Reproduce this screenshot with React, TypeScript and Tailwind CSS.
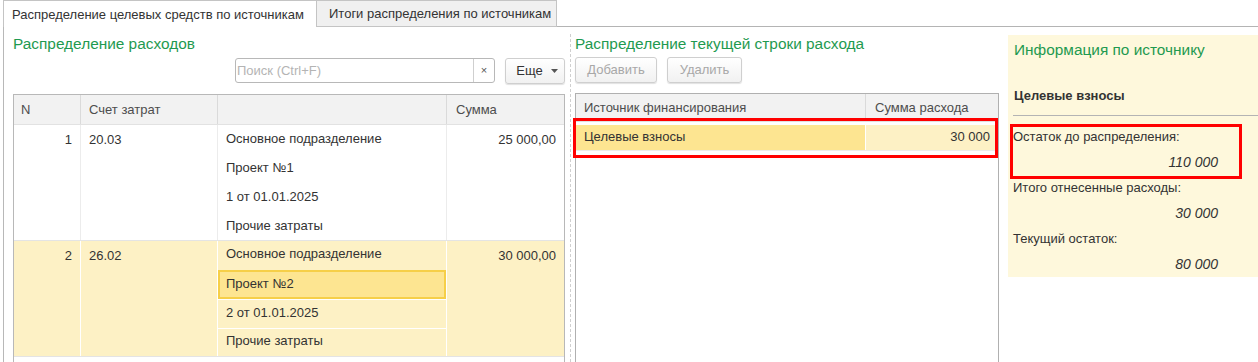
import React from "react";

const leftRows = [
  {
    n: "1",
    account: "20.03",
    lines: ["Основное подразделение", "Проект №1", "1 от 01.01.2025", "Прочие затраты"],
    sum: "25 000,00",
    current: false,
  },
  {
    n: "2",
    account: "26.02",
    lines: ["Основное подразделение", "Проект №2", "2 от 01.01.2025", "Прочие затраты"],
    sum: "30 000,00",
    current: true,
  },
];

const sourceInfo = [
  { label: "Остаток до распределения:", value: "110 000" },
  { label: "Итого отнесенные расходы:", value: "30 000" },
  { label: "Текущий остаток:", value: "80 000" },
];

function ToolButton({ children, disabled, className = "" }: { children: React.ReactNode; disabled?: boolean; className?: string }) {
  return (
    <button
      type="button"
      className={`flex h-[26px] items-center justify-center rounded-[3px] border border-[#cfcfcf] bg-gradient-to-b from-white to-[#f1f1f1] shadow-[0_1px_1px_rgba(0,0,0,0.12)] ${
        disabled ? "text-[#a8a8a8]" : "text-[#333]"
      } ${className}`}
    >
      {children}
    </button>
  );
}

function ExpensesTable() {
  return (
    <div className="mt-[11px] w-[552px] border border-[#b8b8b8]">
      {/* header */}
      <div className="flex h-[30px] border-b border-[#e2e2e2] bg-[#f2f2f2] text-[#4d4d4d]">
        <div className="flex w-[67px] items-center border-r border-[#dadada] pl-[7px]">N</div>
        <div className="flex w-[137px] items-center border-r border-[#dadada] pl-[8px]">Счет затрат</div>
        <div className="w-[229px] border-r border-[#dadada]" />
        <div className="flex flex-1 items-center pl-[9px]">Сумма</div>
      </div>
      {leftRows.map((row) => {
        const line = row.current ? "border-white" : "border-[#ececec]";
        return (
          <div
            key={row.n}
            className={`flex border-b border-[#e4e4e4] ${row.current ? "bg-[#fdf1c5]" : "bg-white"}`}
          >
            <div className={`w-[67px] border-r ${line} pr-[8px] pt-[5px] text-right`}>{row.n}</div>
            <div className={`w-[137px] border-r ${line} pl-[8px] pt-[5px]`}>{row.account}</div>
            <div className={`flex w-[229px] flex-col border-r ${line}`}>
              {row.lines.map((text, i) => {
                const selected = row.current && i === 1;
                const height = i === 3 ? "h-[28px]" : "h-[29px]";
                if (selected) {
                  return (
                    <div key={i} className={`flex ${height} items-center border-2 border-[#f6cf48] bg-[#fde591] pb-[1px] pl-[6px]`}>
                      {text}
                    </div>
                  );
                }
                return (
                  <div
                    key={i}
                    className={`flex ${height} items-center pl-[8px] ${
                      row.current ? "pb-[3px]" : "pb-[1px]"
                    } ${row.current && i > 0 ? "border-t border-white" : ""}`}
                  >
                    {text}
                  </div>
                );
              })}
            </div>
            <div className="flex-1 pr-[8px] pt-[5px] text-right">{row.sum}</div>
          </div>
        );
      })}
      <div className="h-[10px]" />
    </div>
  );
}

function SourcesTable() {
  return (
    <div className="relative mt-[10px] h-[300px] w-[424px] border border-[#b0b0b0]">
      <div className="flex h-[28px] border-b border-[#e0e0e0] bg-[#f2f2f2] text-[#4d4d4d]">
        <div className="flex w-[290px] items-center border-r border-[#dadada] pl-[8px]">Источник финансирования</div>
        <div className="flex flex-1 items-center pl-[9px]">Сумма расхода</div>
      </div>
      <div className="mt-[3px] flex h-[26px] border-b border-[#ececec]">
        <div className="flex w-[290px] items-center border-r border-white bg-[#fde591] pb-[1px] pl-[8px]">Целевые взносы</div>
        <div className="flex flex-1 items-center justify-end bg-[#fdf1c5] pb-[1px] pr-[8px]">30 000</div>
      </div>
      {/* annotation */}
      <div className="pointer-events-none absolute left-[-3px] top-[24px] h-[40px] w-[425px] border-[3px] border-[#ff0000]" />
    </div>
  );
}

function SourcePanel() {
  return (
    <div className="relative mt-[8px] h-[242px] w-[250px] bg-[#fef8dc]">
      <div className="pl-[6px] pt-[5px] text-[15.4px] leading-[20px] text-[#1f9a50]">Информация по источнику</div>
      <div className="mt-[28px] pl-[6px] font-bold leading-[16px] text-[#333]">Целевые взносы</div>
      <div className="ml-[5px] mt-[11px] border-t border-[#b4b4b4]" />
      <div className="mt-[8px]">
        {sourceInfo.map((item) => (
          <div key={item.label}>
            <div className="flex h-[25px] items-center pl-[5px] text-[#333]">{item.label}</div>
            <div className="flex h-[26px] items-center justify-end pr-[40px] text-[14px] italic text-[#333]">{item.value}</div>
          </div>
        ))}
      </div>
      {/* annotation */}
      <div className="pointer-events-none absolute left-[2px] top-[89px] h-[55px] w-[232px] border-[3px] border-[#ff0000]" />
    </div>
  );
}

export default function App() {
  return (
    <div className="h-[362px] w-[1258px] overflow-hidden bg-white font-['Liberation_Sans',Arial,sans-serif] text-[13px] text-[#333]">
      {/* tabs */}
      <div className="flex h-[27px]">
        <div className="ml-[3px] flex h-[27px] w-[313px] items-center border-l border-t border-[#c4c4c4] bg-white pl-[8px] pt-[1px]">
          Распределение целевых средств по источникам
        </div>
        <div className="flex h-[27px] w-[241px] items-center border border-[#c4c4c4] bg-[#f0f0f0] pl-[12px]">
          Итоги распределения по источникам
        </div>
        <div className="flex-1 border-b border-[#b4b4b4]" />
      </div>

      <div className="ml-[3px] flex h-[335px] border-l border-[#b8b8b8]">
        {/* left: expenses */}
        <div className="w-[562px] pl-[9px]">
          <div className="pt-[7px] text-[15.4px] leading-[20px] text-[#1f9a50]">Распределение расходов</div>
          <div className="mt-[4px] flex h-[25px] justify-end">
            <div className="flex h-[25px] w-[260px] rounded-[3px] border border-[#b8b8b8] bg-white">
              <div className="flex flex-1 items-center pl-[1px] text-[#b4b4b4]">Поиск (Ctrl+F)</div>
              <div className="flex w-[21px] items-center justify-center border-l border-[#cfcfcf] text-[11px] text-[#555]">×</div>
            </div>
            <ToolButton className="ml-[10px] w-[60px] gap-[8px] pl-[4px]">
              <span>Еще</span>
              <svg width="7" height="4" viewBox="0 0 7 4" aria-hidden>
                <path d="M0 0h7L3.5 4z" fill="#555" />
              </svg>
            </ToolButton>
          </div>
          <ExpensesTable />
        </div>

        {/* separator */}
        <div className="ml-[5px] mt-[7px] border-l border-dashed border-[#cfcfcf]" />

        {/* middle: sources of the current row */}
        <div className="ml-[4px] w-[424px]">
          <div className="pt-[7px] text-[15.4px] leading-[20px] text-[#1f9a50]">Распределение текущей строки расхода</div>
          <div className="mt-[3px] flex gap-[10px]">
            <ToolButton disabled className="w-[82px]">Добавить</ToolButton>
            <ToolButton disabled className="w-[75px]">Удалить</ToolButton>
          </div>
          <SourcesTable />
        </div>

        {/* right: source info */}
        <div className="ml-[9px]">
          <SourcePanel />
        </div>
      </div>
    </div>
  );
}
